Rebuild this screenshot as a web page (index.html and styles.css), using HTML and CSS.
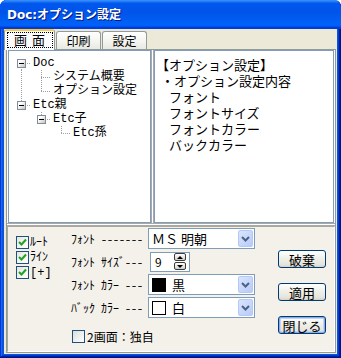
FILE: index.html
```html
<!DOCTYPE html>
<html lang="ja">

<head>
    <meta charset="UTF-8">
    <meta name="viewport" content="width=device-width, initial-scale=1.0">
    <title>Doc:オプション設定</title>
    <link rel="stylesheet" href="styles.css">
</head>

<body>
    <div class="window">
        <div class="titlebar">Doc:オプション設定</div>

        <div class="client">
            <div class="tabs">
                <div class="tab active"><span class="focus">画面</span></div>
                <div class="tab">印刷</div>
                <div class="tab">設定</div>
            </div>

            <div class="page">
                <div class="panes">
                    <div class="tree">
                        <div class="node"><span class="cell down"><i class="exp"></i></span><span class="label">Doc</span></div>
                        <div class="node"><span class="cell pipe"></span><span class="cell tee"></span><span class="label">システム概要</span></div>
                        <div class="node"><span class="cell pipe"></span><span class="cell elbow"></span><span class="label">オプション設定</span></div>
                        <div class="node"><span class="cell elbow"><i class="exp"></i></span><span class="label">Etc親</span></div>
                        <div class="node"><span class="cell"></span><span class="cell elbow"><i class="exp"></i></span><span class="label">Etc子</span></div>
                        <div class="node"><span class="cell"></span><span class="cell"></span><span class="cell elbow"></span><span class="label">Etc孫</span></div>
                    </div>
                    <div class="vsplit"></div>
                    <div class="memo">
                        <div>【オプション設定】</div>
                        <div class="dot">・オプション設定内容</div>
                        <div class="item">フォント</div>
                        <div class="item">フォントサイズ</div>
                        <div class="item">フォントカラー</div>
                        <div class="item">バックカラー</div>
                    </div>
                </div>

                <div class="hsplit"></div>

                <div class="settings">
                    <div class="checks">
                        <label class="check"><span class="box on"><svg width="9" height="9" viewBox="0 0 9 9"><path d="M1 4 L3.5 6.5 L8 1.5" fill="none" stroke="#21a121" stroke-width="2"/></svg></span><span class="han">ﾙｰﾄ</span></label>
                        <label class="check"><span class="box on"><svg width="9" height="9" viewBox="0 0 9 9"><path d="M1 4 L3.5 6.5 L8 1.5" fill="none" stroke="#21a121" stroke-width="2"/></svg></span><span class="han">ﾗｲﾝ</span></label>
                        <label class="check"><span class="box on"><svg width="9" height="9" viewBox="0 0 9 9"><path d="M1 4 L3.5 6.5 L8 1.5" fill="none" stroke="#21a121" stroke-width="2"/></svg></span><span class="han">[+]</span></label>
                    </div>

                    <div class="fields">
                        <span class="han">ﾌｫﾝﾄ -------</span>
                        <div class="combo"><span class="value">ＭＳ 明朝</span><span class="drop"><svg width="9" height="6" viewBox="0 0 9 6"><path d="M1 1 L4.5 4.5 L8 1" fill="none" stroke="#4d6185" stroke-width="2"/></svg></span></div>

                        <span class="han">ﾌｫﾝﾄ ｻｲｽﾞ---</span>
                        <div class="spin"><span class="value">9</span><span class="arrows"><i class="up"></i><i class="down"></i></span></div>

                        <span class="han">ﾌｫﾝﾄ ｶﾗｰ ---</span>
                        <div class="combo"><span class="swatch black"></span><span class="value">黒</span><span class="drop"><svg width="9" height="6" viewBox="0 0 9 6"><path d="M1 1 L4.5 4.5 L8 1" fill="none" stroke="#4d6185" stroke-width="2"/></svg></span></div>

                        <span class="han">ﾊﾞｯｸ ｶﾗｰ ---</span>
                        <div class="combo"><span class="swatch"></span><span class="value">白</span><span class="drop"><svg width="9" height="6" viewBox="0 0 9 6"><path d="M1 1 L4.5 4.5 L8 1" fill="none" stroke="#4d6185" stroke-width="2"/></svg></span></div>

                        <label class="check dual"><span class="box"></span>2画面：独自</label>
                    </div>

                    <div class="buttons">
                        <button>破棄</button>
                        <button>適用</button>
                        <button class="default">閉じる</button>
                    </div>
                </div>
            </div>
        </div>
    </div>
</body>

</html>
```

FILE: styles.css
```css
* {
    box-sizing: border-box;
}

body {
    margin: 0;
    background: #fff;
    font-family: "Noto Sans CJK JP", sans-serif;
    font-size: 12px;
    color: #000;
}

/* XP venster */
.window {
    width: 341px;
    height: 358px;
    display: flex;
    flex-direction: column;
    padding: 0 4px 4px;
    background: #0855dd;
    border-radius: 7px 7px 0 0;
    box-shadow: inset -1px -1px #00138c, inset 1px 0 #0831d9, inset -2px -2px #001ea0, inset 2px 0 #166aee, inset -3px -3px #003bda;
}

.titlebar {
    height: 29px;
    margin: 0 -4px;
    padding: 2px 0 0 7px;
    border-radius: 7px 7px 0 0;
    background: linear-gradient(180deg, #3d95ff, #0058ee 12%, #0054e9 40%, #0062f7 85%, #005bff 90%, #003dd7 94%, #003dd7);
    color: #fff;
    font-family: "DejaVu Sans", "Noto Sans CJK JP", sans-serif;
    font-weight: bold;
    font-size: 12px;
    line-height: 27px;
    text-shadow: 1px 1px #0a1883;
}

.client {
    flex: 1;
    display: flex;
    flex-direction: column;
    padding: 0 1px 1px 2px;
    background: #ece9d8;
}

/* tabs */
.tabs {
    display: flex;
    align-items: flex-end;
    height: 20px;
    margin-left: -2px;
}

.tab {
    width: 45px;
    height: 18px;
    margin-right: 1px;
    border: 1px solid #919b9c;
    border-bottom: none;
    border-radius: 3px 3px 0 0;
    background: linear-gradient(#fff, #f3f3ef 60%, #e9e8e1);
    font-size: 12px;
    line-height: 16px;
    text-align: center;
    padding-top: 1px;
}

.tab.active {
    position: relative;
    width: 51px;
    height: 21px;
    margin-bottom: -1px;
    border-top: 2px solid #ffc83c;
    background: #fcfcfe;
    padding-top: 1px;
}

.focus {
    display: inline-block;
    width: 46px;
    border: 1px dotted #000;
    font-size: 13px;
    line-height: 14px;
    letter-spacing: 5px;
    padding-left: 5px;
}

.page {
    flex: 1;
    display: flex;
    flex-direction: column;
    border: 1px solid #919b9c;
    background: #fcfcfe;
}

.panes {
    height: 173px;
    display: flex;
    padding: 0 1px;
}

/* boomstructuur */
.tree {
    width: 143px;
    border: 1px solid #7f9db9;
    background: #fff;
    padding: 5px 0 0 2px;
    --dotv: repeating-linear-gradient(to bottom, #a0a0a0 0 1px, transparent 1px 2px);
    --doth: repeating-linear-gradient(to right, #a0a0a0 0 1px, transparent 1px 2px);
}

.node {
    display: flex;
    height: 14px;
    white-space: nowrap;
}

.cell {
    width: 20px;
    height: 14px;
    flex: none;
    padding: 3px 0 0 6px;
}

.pipe {
    background: var(--dotv) 10px 0 / 1px 100% no-repeat;
}

.tee {
    background: var(--dotv) 10px 0 / 1px 100% no-repeat, var(--doth) 10px 7px / 10px 1px no-repeat;
}

.elbow {
    background: var(--dotv) 10px 0 / 1px 8px no-repeat, var(--doth) 10px 7px / 10px 1px no-repeat;
}

.down {
    background: var(--dotv) 10px 7px / 1px 7px no-repeat, var(--doth) 10px 7px / 10px 1px no-repeat;
}

.exp {
    display: flex;
    align-items: center;
    justify-content: center;
    width: 9px;
    height: 9px;
    border: 1px solid #7f8d9c;
    background: linear-gradient(135deg, #fff 30%, #c6c3b4);
}

.exp::before {
    content: "";
    width: 5px;
    height: 1px;
    background: #000;
}

.label {
    padding: 1px 0 0 2px;
    font-family: "Liberation Mono", "Noto Sans CJK JP", monospace;
    font-size: 12px;
    line-height: 13px;
}

.vsplit {
    width: 3px;
    border-left: 1px solid #a9a9a9;
    border-right: 1px solid #a9a9a9;
    background: #fff;
}

.memo {
    flex: 1;
    border: 1px solid #7f9db9;
    background: #fff;
    padding: 7px 0 0 1px;
    font-family: "Liberation Sans", "Noto Sans CJK JP", sans-serif;
    font-size: 13px;
    line-height: 16px;
}

.memo .dot {
    padding-left: 5px;
}

.memo .item {
    padding-left: 13px;
}

.hsplit {
    height: 3px;
    border-top: 1px solid #a9a9a9;
    border-bottom: 1px solid #a9a9a9;
    background: #fff;
}

/* instellingen onderaan */
.settings {
    flex: 1;
    display: flex;
    align-items: flex-start;
    padding: 1px 0 0 8px;
    border: 1px solid #aca899;
    border-right-color: #fff;
    border-bottom-color: #fff;
    background: #f3f1ea;
}

.han {
    font-family: "Noto Sans Mono CJK JP", "Noto Sans CJK JP", monospace;
    font-size: 12px;
    white-space: pre;
}

.checks {
    width: 55px;
    padding-top: 8px;
    display: flex;
    flex-direction: column;
    gap: 2px;
}

.check {
    display: flex;
    align-items: flex-start;
    gap: 1px;
    height: 13px;
}

.checks .han {
    font-family: "Liberation Mono", "Noto Sans Mono CJK JP", monospace;
    line-height: 13px;
    padding-top: 1px;
}

.box {
    display: flex;
    align-items: center;
    justify-content: center;
    flex: none;
    width: 13px;
    height: 13px;
    border: 1px solid #1c5180;
    background: linear-gradient(135deg, #dcdcd7, #fff);
}

.box.on {
    background: linear-gradient(135deg, #e6e6e0, #fff);
}

.fields {
    display: grid;
    grid-template-columns: 77px 107px;
    grid-auto-rows: 21px;
    row-gap: 2px;
    align-items: center;
}

.combo {
    display: flex;
    align-items: center;
    height: 21px;
    border: 1px solid #7f9db9;
    background: #fff;
    padding: 0 1px 0 3px;
    font-size: 13px;
}

.combo .value {
    flex: 1;
}

.drop {
    display: flex;
    align-items: center;
    justify-content: center;
    width: 15px;
    height: 17px;
    border: 1px solid #b5c8f7;
    border-radius: 2px;
    background: linear-gradient(135deg, #dae5fd, #b7cbf8);
}

.swatch {
    width: 14px;
    height: 14px;
    margin-right: 6px;
    border: 1px solid #000;
    background: #fff;
}

.swatch.black {
    background: #000;
}

.spin {
    display: flex;
    align-items: center;
    width: 40px;
    height: 20px;
    margin-left: 2px;
    border: 1px solid #7f9db9;
    background: #fff;
    padding-left: 4px;
    font-size: 12px;
}

.spin .value {
    width: 19px;
}

.arrows {
    display: flex;
    flex-direction: column;
    gap: 1px;
}

.arrows i {
    display: flex;
    align-items: center;
    justify-content: center;
    width: 12px;
    height: 8px;
    border: 1px solid #3c3c3c;
    border-radius: 2px;
    background: linear-gradient(#fff, #d4d0c8);
}

.arrows i::before {
    content: "";
    border-left: 3px solid transparent;
    border-right: 3px solid transparent;
}

.arrows .up::before {
    border-bottom: 3px solid #000;
}

.arrows .down::before {
    border-top: 3px solid #000;
}

.check.dual {
    grid-column: 1 / 3;
    align-items: center;
    margin: 12px 0 0 1px;
    gap: 2px;
    font-size: 12px;
}

.buttons {
    display: flex;
    flex-direction: column;
    gap: 15px;
    margin-left: 23px;
    padding-top: 22px;
}

button {
    width: 48px;
    height: 18px;
    padding: 0;
    border: 1px solid #003c74;
    border-radius: 3px;
    background: linear-gradient(180deg, #fff, #f0f0ea 45%, #e5e4dc 85%, #d6d0c5);
    font-family: "Noto Sans CJK JP", sans-serif;
    font-size: 13px;
    line-height: 15px;
    color: #000;
}

button.default {
    box-shadow: inset 0 0 0 1px #8aaae8, inset 0 0 0 2px #c2d4f7;
}
```
